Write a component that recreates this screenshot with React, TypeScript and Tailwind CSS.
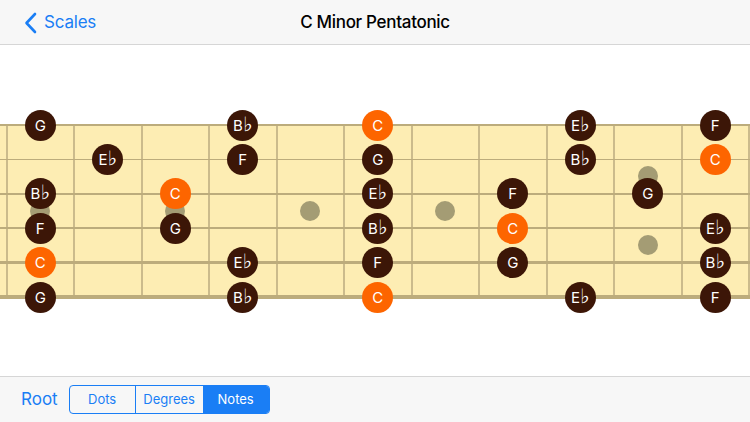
import React from 'react'

type Note = { s: number; f: number; n: string; root?: boolean }

const NOTES: Note[] = [
  { s: 0, f: 0, n: 'G' }, { s: 0, f: 3, n: 'B♭' }, { s: 0, f: 5, n: 'C', root: true }, { s: 0, f: 8, n: 'E♭' }, { s: 0, f: 10, n: 'F' },
  { s: 1, f: 1, n: 'E♭' }, { s: 1, f: 3, n: 'F' }, { s: 1, f: 5, n: 'G' }, { s: 1, f: 8, n: 'B♭' }, { s: 1, f: 10, n: 'C', root: true },
  { s: 2, f: 0, n: 'B♭' }, { s: 2, f: 2, n: 'C', root: true }, { s: 2, f: 5, n: 'E♭' }, { s: 2, f: 7, n: 'F' }, { s: 2, f: 9, n: 'G' },
  { s: 3, f: 0, n: 'F' }, { s: 3, f: 2, n: 'G' }, { s: 3, f: 5, n: 'B♭' }, { s: 3, f: 7, n: 'C', root: true }, { s: 3, f: 10, n: 'E♭' },
  { s: 4, f: 0, n: 'C', root: true }, { s: 4, f: 3, n: 'E♭' }, { s: 4, f: 5, n: 'F' }, { s: 4, f: 7, n: 'G' }, { s: 4, f: 10, n: 'B♭' },
  { s: 5, f: 0, n: 'G' }, { s: 5, f: 3, n: 'B♭' }, { s: 5, f: 5, n: 'C', root: true }, { s: 5, f: 8, n: 'E♭' }, { s: 5, f: 10, n: 'F' },
]

// string thickness, top (high) to bottom (low)
const STRINGS = [1.5, 1.5, 2, 2, 3, 3.5]
const STRING_GAP = 34.4
const FRET_W = 67.5
const FRET0 = 6.5

// inlay markers: [fret, y offset from board top]
const INLAYS: [number, number][] = [
  [0, 87], [2, 87], [4, 87], [6, 87], [9, 52], [9, 121],
]

const fretX = (f: number) => FRET0 + FRET_W * f + FRET_W / 2 - 34

function NoteLabel({ name }: { name: string }) {
  const letter = name[0]
  const flat = name.length > 1
  return (
    <span className="flex items-center">
      <span className="text-[15px]">{letter}</span>
      {flat && (
        <span className="text-[20px] leading-none mt-[-3px]" style={{ fontFamily: '"DejaVu Sans", sans-serif' }}>♭</span>
      )}
    </span>
  )
}

export default function App() {
  return (
    <div className="w-[750px] h-[422px] flex flex-col bg-white overflow-hidden" style={{ fontFamily: 'Inter, "Liberation Sans", "DejaVu Sans", sans-serif' }}>
      {/* Nav bar */}
      <div className="h-[45px] shrink-0 bg-[#f7f7f7] border-b border-[#d6d6d6] flex items-center relative pt-[2px]">
        <div className="flex items-center pl-[24px] text-[#1a7ef5] text-[17px] gap-[7px]">
          <svg width="13" height="22" viewBox="0 0 13 22" fill="none">
            <path d="M11 2 L2.5 11 L11 20" stroke="#1a7ef5" strokeWidth="2.6" strokeLinecap="round" strokeLinejoin="round" />
          </svg>
          <span className="tracking-[-0.2px]">Scales</span>
        </div>
        <div className="absolute left-0 right-0 text-center text-[17px] font-medium text-black tracking-[-0.3px] pointer-events-none">
          C Minor Pentatonic
        </div>
      </div>

      {/* Fretboard area */}
      <div className="flex-1 flex flex-col justify-center">
        <div className="relative h-[175px] bg-[#fdedb3] mt-[2px]">
          {/* frets */}
          {Array.from({ length: 12 }).map((_, i) => (
            <div key={i} className="absolute top-0 bottom-0 w-[2px] bg-[#cbbb8c]" style={{ left: FRET0 + FRET_W * i - 1 }} />
          ))}
          {/* inlays */}
          {INLAYS.map(([f, y], i) => (
            <div key={i} className="absolute w-[20px] h-[20px] rounded-full bg-[#a49c74]" style={{ left: fretX(f) + 24, top: y - 10 }} />
          ))}
          {/* strings */}
          {STRINGS.map((t, i) => (
            <div key={i} className="absolute left-0 right-0 bg-[#bcac7c]" style={{ top: 1 + STRING_GAP * i - t / 2, height: t }} />
          ))}
          {/* notes */}
          {NOTES.map((n, i) => (
            <div
              key={i}
              className={`absolute w-[31px] h-[31px] rounded-full flex items-center justify-center text-white text-[16px] leading-none ${n.root ? 'bg-[#fd6500]' : 'bg-[#3c1607]'}`}
              style={{ left: fretX(n.f) + 18.5, top: 1 + STRING_GAP * n.s - 15.5 }}
            >
              <NoteLabel name={n.n} />
            </div>
          ))}
        </div>
      </div>

      {/* Bottom toolbar */}
      <div className="h-[46px] shrink-0 bg-[#f7f7f7] border-t border-[#d6d6d6] flex items-center pl-[21px] gap-[11px]">
        <span className="text-[#1a7ef5] text-[17px]">Root</span>
        <div className="flex h-[29px] rounded-[4px] border border-[#1a7ef5] overflow-hidden text-[13px]">
          <div className="w-[66px] flex items-center justify-center text-[#1a7ef5] border-r border-[#1a7ef5]">Dots</div>
          <div className="w-[67px] flex items-center justify-center text-[#1a7ef5]">Degrees</div>
          <div className="w-[66px] flex items-center justify-center bg-[#1a7ef5] text-white">Notes</div>
        </div>
      </div>
    </div>
  )
}
